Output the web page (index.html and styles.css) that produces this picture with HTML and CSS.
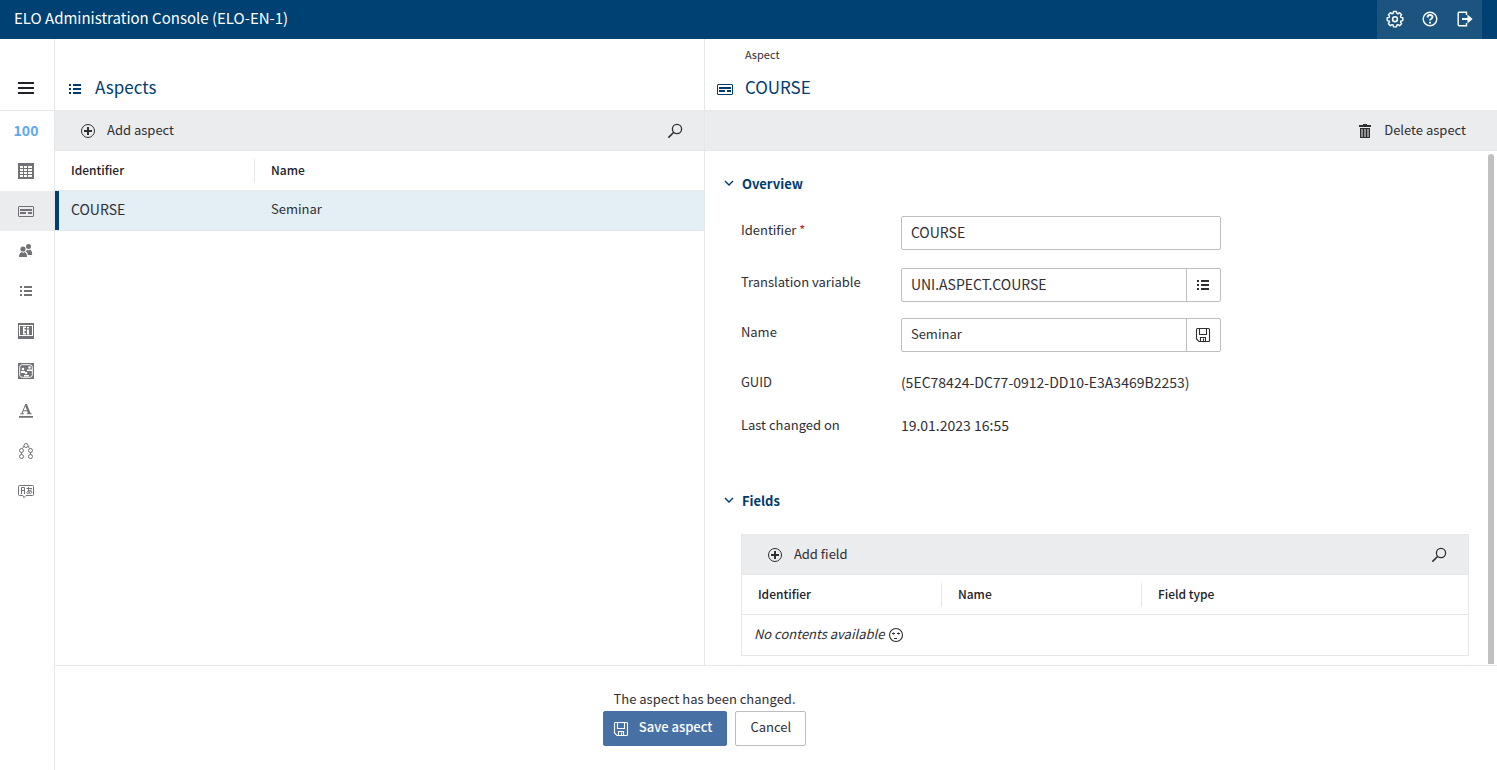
FILE: index.html
```html
<!DOCTYPE html>
<html lang="en">
<head>
<meta charset="utf-8">
<title>ELO Administration Console</title>
<link rel="stylesheet" href="styles.css">
</head>
<body>
<svg class="defs" aria-hidden="true">
  <symbol id="list" viewBox="0 0 16 16"><path fill="currentColor" d="M2 3h2v2H2zM6 3h8v2H6zM2 7h2v2H2zM6 7h8v2H6zM2 11h2v2H2zM6 11h8v2H6z"/></symbol>
  <symbol id="card" viewBox="0 0 16 16"><path fill="currentColor" fill-rule="evenodd" d="M1 3h14l1 1v9l-1 1H1l-1-1V4zM1 4v9h14V4zM2 6h12v2H2zM2 9h6v2H2zM10 9h4v2h-4z"/></symbol>
  <symbol id="plus" viewBox="0 0 16 16"><circle cx="8" cy="8" r="6.500" fill="none" stroke="currentColor" stroke-width="1"/><path stroke="currentColor" stroke-width="2" d="M8 4v8M4 8h8"/></symbol>
  <symbol id="search" viewBox="0 0 16 16"><circle cx="10" cy="6" r="4.600" fill="none" stroke="currentColor" stroke-width="1.300"/><path stroke="currentColor" stroke-width="1.600" d="M6.800 9.200 1.400 14.600"/></symbol>
  <symbol id="chevron" viewBox="0 0 10 10"><path fill="none" stroke="currentColor" stroke-width="1.400" d="M1 2l4 4 4-4"/></symbol>
  <symbol id="save" viewBox="0 0 16 16"><path fill="none" stroke="currentColor" stroke-width="1.100" d="M2.500 1.500h11q1 0 1 1v11q0 1-1 1H4l-2.500-2.500V2.500q0-1 1-1zM4.500 1.500v6h7v-6M5.500 14.500v-4h5v4M8.500 11.500v3"/></symbol>
</svg>
<header class="topbar">
  <h1 class="app-title">ELO Administration Console (ELO-EN-1)</h1>
  <div class="top-actions">
    <button class="top-btn" aria-label="Settings"><svg class="icon-18" viewBox="0 0 18 18"><path fill="none" stroke="currentColor" stroke-width="1.400" stroke-linejoin="round" d="M7.500 1.500h3l.4 1.900 1 .4 1.700-1.100 2 2-1.100 1.700.4 1 1.900.4v2.800l-1.900.4-.4 1 1.100 1.700-2 2-1.700-1.100-1 .4-.4 1.900h-3l-.4-1.900-1-.4-1.700 1.100-2-2L3.500 12l-.4-1-1.900-.4V7.800l1.900-.4.4-1-1.100-1.700 2-2 1.700 1.100 1-.4z"/><circle cx="9" cy="9.200" r="2.400" fill="none" stroke="currentColor" stroke-width="1.600"/></svg></button>
    <button class="top-btn" aria-label="Help"><svg class="icon-18" viewBox="0 0 18 18" fill="none" stroke="currentColor"><circle cx="9" cy="9" r="6.800" stroke-width="1.400"/><path stroke-width="1.900" d="M6.600 7.400c0-3.200 4.900-3 4.900-.3C11.500 8.800 9 8.700 9 10.600M9 11.700v1.900"/></svg></button>
    <button class="top-btn" aria-label="Log out"><svg class="icon-18" viewBox="0 0 18 18" fill="none" stroke="currentColor"><path stroke-width="1.400" d="M10.500 5V2.200H3.200q-1 0-1 1v11.600q0 1 1 1h7.300V13"/><path stroke-width="2" d="M6 9h8"/><path fill="currentColor" stroke="none" d="M11.500 4.600 16.600 9l-5.100 4.400z"/></svg></button>
  </div>
</header>
<div class="shell">
  <nav class="sidebar" aria-label="Main">
    <button class="menu-btn" aria-label="Menu"><svg class="icon-16" viewBox="0 0 16 16"><path fill="currentColor" d="M0 2h16v2H0zM0 7h16v2H0zM0 12h16v2H0z"/></svg></button>
    <a class="nav-item version" href="#">100</a>
    <a class="nav-item" href="#" aria-label="Metadata forms"><svg class="icon-16" viewBox="0 0 16 16"><path fill="currentColor" fill-rule="evenodd" d="M0 0h16v16H0zM2 3v2h3V3zM6 3v2h3V3zM10 3v2h4V3zM2 6v2h3V6zM6 6v2h3V6zM10 6v2h4V6zM2 9v2h3V9zM6 9v2h3V9zM10 9v2h4V9zM2 12v2h3v-2zM6 12v2h3v-2zM10 12v2h4v-2z"/></svg></a>
    <a class="nav-item active" href="#" aria-label="Aspects" aria-current="page"><svg class="icon-16"><use href="#card"/></svg></a>
    <a class="nav-item" href="#" aria-label="Users"><svg class="icon-16" viewBox="0 0 16 16"><g fill="currentColor"><circle cx="10.500" cy="3.500" r="2.500"/><circle cx="5" cy="6" r="2.600"/><path d="M1 14c0-3 1.500-4.600 3-4.900l1.200 1 1.200-1C8 9.500 9 11 9 14zM8.200 7.800 9.500 6.700l1.200.9 1.300-1c1.500.7 2.200 2.400 2.200 5.400H10c-.3-1.600-1-2.800-2.300-3.400z"/></g></svg></a>
    <a class="nav-item" href="#" aria-label="Lists"><svg class="icon-16"><use href="#list"/></svg></a>
    <a class="nav-item" href="#" aria-label="Field templates"><svg class="icon-16" viewBox="0 0 16 16"><path fill="currentColor" fill-rule="evenodd" d="M0 0h16v16H0zM1 2v11h14V2zM2 3h12v9H2zM5 3.500v8h3V10H6.500V8H8V6.500H6.500V5H8V3.500zM9 4v1.500h2V4zM9 6.500v5h2v-5z"/></svg></a>
    <a class="nav-item" href="#" aria-label="Groups"><svg class="icon-16" viewBox="0 0 16 16"><path fill="currentColor" d="M0 0h16v16H0z"/><rect x="1.700" y="1.700" width="12.600" height="12.600" rx="2.500" fill="none" stroke="#fff"/><g fill="#fff"><circle cx="5" cy="6" r="1.300"/><circle cx="11.500" cy="4.500" r="1.300"/><circle cx="8" cy="10" r="1.300"/><path d="M3 10V8h4v2zM9 8V6.500h5V8zM6 13.500V12h5v1.500z"/></g></svg></a>
    <a class="nav-item" href="#" aria-label="Fonts"><svg class="icon-16" viewBox="0 0 16 16"><path fill="currentColor" fill-rule="evenodd" d="M7.300 1h1.600l3.700 9.200 1.200.4v.6H8.700v-.6l1.200-.4-.7-2H5.400l-.7 2 1.300.4v.6H2.200v-.6l1.300-.4zM5.700 7.200H9L7.300 3.300zM1 13h14v1.800H1z"/></svg></a>
    <a class="nav-item" href="#" aria-label="Structure"><svg class="icon-16" viewBox="0 0 16 16" fill="none" stroke="currentColor"><circle cx="8" cy="2.500" r="2"/><circle cx="3.500" cy="7.500" r="2"/><circle cx="12.500" cy="7.500" r="2"/><circle cx="3.500" cy="13.500" r="2"/><circle cx="12.500" cy="13.500" r="2"/><path d="M6 3 4.500 5.500M10 3l1.500 2.500M3.500 9.500v2M12.500 9.500v2"/></svg></a>
    <a class="nav-item" href="#" aria-label="Translations"><svg class="icon-16" viewBox="0 0 16 16" fill="none" stroke="currentColor"><path d="M1.500 2.500h13q1 0 1 1v8q0 1-1 1H8l-2 2.200-1.200-2.200H1.500q-1 0-1-1v-8q0-1 1-1z"/><path d="M3.500 11V4.500h3V11M3.500 7.500h3M8.500 5.500H14M10.500 4c-.2 3 .2 5 1 6.500M13 6.500c-.6 2.500-2 4-3.400 4-1.600 0-.6-3 1.900-3 2.800 0 2.800 2.600.8 3.300"/></svg></a>
  </nav>
  <div class="workspace">
    <main class="panes">
      <section class="list-pane">
        <div class="pane-head">
          <div class="pane-title"><svg class="icon-16"><use href="#list"/></svg><h2 class="heading">Aspects</h2></div>
        </div>
        <div class="toolbar">
          <button class="tool-btn"><svg class="icon-16"><use href="#plus"/></svg>Add aspect</button>
          <button class="tool-btn search" aria-label="Search"><svg class="icon-16"><use href="#search"/></svg></button>
        </div>
        <table class="grid">
          <thead><tr><th class="col">Identifier</th><th>Name</th></tr></thead>
          <tbody><tr class="selected"><td class="code">COURSE</td><td>Seminar</td></tr></tbody>
        </table>
      </section>
      <section class="detail-pane">
        <div class="pane-head">
          <div class="crumb">Aspect</div>
          <div class="pane-title"><svg class="icon-16"><use href="#card"/></svg><h2 class="heading">COURSE</h2></div>
        </div>
        <div class="toolbar end">
          <button class="tool-btn"><svg class="icon-16" viewBox="0 0 16 16"><path fill="currentColor" fill-rule="evenodd" d="M6 1h4v1h4v2H2V2h4zM3 5h10v10H3zM4.500 6v8h1V6zM7.500 6v8h1V6zM10.500 6v8h1V6z"/></svg>Delete aspect</button>
        </div>
        <div class="detail-body">
          <button class="section-btn"><svg class="icon-10"><use href="#chevron"/></svg>Overview</button>
          <div class="form">
            <div class="field wide"><label for="ident">Identifier <span class="required">*</span></label><div class="control"><input id="ident" class="code" type="text" value="COURSE"></div></div>
            <div class="field"><label for="trans">Translation variable</label><div class="control"><input id="trans" class="code" type="text" value="UNI.ASPECT.COURSE"><button class="addon" aria-label="Choose variable"><svg class="icon-16"><use href="#list"/></svg></button></div></div>
            <div class="field"><label for="name">Name</label><div class="control"><input id="name" type="text" value="Seminar"><button class="addon" aria-label="Save name"><svg class="icon-16"><use href="#save"/></svg></button></div></div>
            <div class="field static"><span class="static-label">GUID</span><span class="code">(5EC78424-DC77-0912-DD10-E3A3469B2253)</span></div>
            <div class="field static"><span class="static-label">Last changed on</span><span class="code">19.01.2023 16:55</span></div>
          </div>
          <button class="section-btn"><svg class="icon-10"><use href="#chevron"/></svg>Fields</button>
          <div class="box">
            <div class="toolbar">
              <button class="tool-btn"><svg class="icon-16"><use href="#plus"/></svg>Add field</button>
              <button class="tool-btn search" aria-label="Search fields"><svg class="icon-16"><use href="#search"/></svg></button>
            </div>
            <table class="grid">
              <thead><tr><th class="col">Identifier</th><th class="col">Name</th><th>Field type</th></tr></thead>
              <tbody><tr><td class="empty" colspan="3"><div class="empty-text"><em>No contents available</em><svg class="icon-16" viewBox="0 0 16 16"><circle cx="8" cy="8" r="6.500" fill="none" stroke="currentColor" stroke-width="1.100"/><path fill="none" stroke="currentColor" d="M4 6.500h3M9 6.500h3M5.500 5.500v2M10.500 5.500v2M6 11.500h3"/></svg></div></td></tr></tbody>
            </table>
          </div>
          <div class="box next"></div>
        </div>
        <div class="scroll-thumb"></div>
      </section>
    </main>
    <footer class="footer">
      <div class="message">The aspect has been changed.</div>
      <div class="buttons">
        <button class="btn primary"><svg class="icon-16"><use href="#save"/></svg>Save aspect</button>
        <button class="btn">Cancel</button>
      </div>
    </footer>
  </div>
</div>
</body>
</html>
```
FILE: styles.css
```css
* { box-sizing: border-box; }

body {
  margin: 0;
  height: 100vh;
  display: flex;
  flex-direction: column;
  overflow: hidden;
  background: #fff;
  color: #2f2f33;
  font: 13px/20px "Noto Sans CJK SC", "Noto Sans", sans-serif;
}

button, input {
  font: inherit;
  color: inherit;
  margin: 0;
  padding: 0;
  border: 0;
  background: none;
}

a { color: inherit; text-decoration: none; }
svg { flex: none; display: block; }
h1, h2 { margin: 0; }

.defs { position: absolute; width: 0; height: 0; }
.icon-10 { width: 10px; height: 10px; }
.icon-16 { width: 16px; height: 16px; }
.icon-18 { width: 18px; height: 18px; }
.code { font-size: 14px; }

.topbar {
  flex: none;
  height: 39px;
  display: flex;
  align-items: center;
  justify-content: space-between;
  padding: 0 15px 0 14px;
  background: #004173;
  color: #fff;
}
.app-title { padding-bottom: 3px; font-size: 15px; font-weight: 400; line-height: 20px; }
.top-actions {
  display: flex;
  height: 39px;
  background: #1a547f;
}
.top-btn { width: 35px; display: grid; place-items: center; padding-bottom: 1px; }

.shell { flex: 1; min-height: 0; display: flex; }

.sidebar {
  flex: none;
  width: 55px;
  border-right: 1px solid #e6e7e8;
  color: #717176;
}
.menu-btn {
  width: 100%;
  height: 72px;
  display: flex;
  justify-content: center;
  align-items: flex-end;
  padding: 0 2px 14px 0;
  border-bottom: 1px solid #e6e7e8;
  color: #222226;
}
.nav-item {
  height: 40px;
  display: flex;
  align-items: center;
  justify-content: center;
  padding-right: 2px;
}
.nav-item.active { background: #ebeced; }
.version {
  padding-bottom: 3px;
  color: #5da7f0;
  font-size: 14px;
  font-weight: 700;
}

.workspace { flex: 1; min-width: 0; display: flex; flex-direction: column; }
.panes { flex: 1; min-height: 0; display: flex; }
.list-pane { flex: none; width: 45%; }
.detail-pane {
  position: relative;
  flex: 1;
  min-width: 0;
  display: flex;
  flex-direction: column;
  border-left: 1px solid #e6e7e8;
}

.pane-head {
  flex: none;
  height: 71px;
  display: flex;
  flex-direction: column;
  justify-content: flex-end;
  padding: 0 12px 11px;
}
.crumb { margin: 0 0 13px 28px; font-size: 11px; line-height: 16px; }
.pane-title { display: flex; align-items: center; gap: 12px; color: #003b6d; line-height: 24px; }
.pane-title svg { margin-top: 3px; }
.heading { font-size: 17px; font-weight: 400; }

.toolbar {
  flex: none;
  height: 41px;
  display: flex;
  align-items: center;
  justify-content: space-between;
  padding: 0 21px 2px 25px;
  border: solid #e6e7e8;
  border-width: 1px 0;
  background: #ebeced;
}
.toolbar.end { justify-content: flex-end; padding-right: 31px; }
.tool-btn { display: flex; align-items: center; gap: 11px; }
.tool-btn svg { margin-top: 2px; }

.grid { width: 100%; border-collapse: separate; border-spacing: 0; table-layout: fixed; }
.grid th, .grid td {
  height: 40px;
  padding: 0 16px 3px;
  text-align: left;
  border-bottom: 1px solid #e6e7e8;
}
.grid th { padding-bottom: 2px; font-size: 12px; font-weight: 500; color: #222226; }
.grid th.col {
  width: 200px;
  background: linear-gradient(#e6e7e8, #e6e7e8) right center / 1px 24px no-repeat;
}
.grid .selected { background: #e3eef5; }
.grid .selected td:first-child { box-shadow: inset 4px 0 #003f70; }
.grid td.empty { padding: 0 12px; border: 0; }
.empty-text { display: flex; align-items: center; gap: 4px; }
.empty-text em { margin-top: -3px; }

.detail-body { flex: 1; min-height: 0; overflow: hidden; padding: 23px 28px 0 19px; }
.section-btn {
  display: flex;
  align-items: center;
  gap: 8px;
  color: #003b6d;
  font-weight: 700;
}
.form { padding: 22px 0 37px 17px; }
.field { display: flex; margin-bottom: 16px; }
.field.wide { margin-bottom: 18px; }
.field label, .static-label { flex: none; width: 160px; padding-top: 4px; }
.required { color: #c8202c; }
.control {
  width: 320px;
  height: 34px;
  display: flex;
  border: 1px solid #bcbdbf;
  border-radius: 2px;
}
.control input { flex: 1; min-width: 0; padding: 0 9px 2px; outline: none; }
.addon {
  width: 34px;
  display: grid;
  place-items: center;
  border-left: 1px solid #bcbdbf;
}
.field.static { margin-bottom: 23px; padding-top: 4px; height: 20px; }
.static-label { padding-top: 0; }

.box { margin: 23px 0 0 17px; border: 1px solid #e6e7e8; }
.box .toolbar { height: 40px; border-top: 0; }
.box.next { margin-top: 8px; height: 160px; border-top-color: transparent; }

.scroll-thumb {
  position: absolute;
  top: 115px;
  right: 3px;
  bottom: 1px;
  width: 6px;
  border-radius: 3px 3px 0 0;
  background: #bfc1c3;
}

.footer {
  flex: none;
  height: 105px;
  padding: 22px 143px 0 0;
  border-top: 1px solid #e6e7e8;
  display: flex;
  flex-direction: column;
  align-items: center;
}
.message { margin-bottom: 1px; line-height: 22px; }
.buttons { display: flex; gap: 8px; }
.btn {
  height: 35px;
  display: flex;
  align-items: center;
  gap: 10px;
  padding: 0 14px 3px;
  border: 1px solid #bcbdbf;
  border-radius: 2px;
}
.btn.primary { padding-left: 9px; border-color: #4771a5; background: #4771a5; color: #fff; font-weight: 500; }
.btn svg { margin-top: 3px; }
```
